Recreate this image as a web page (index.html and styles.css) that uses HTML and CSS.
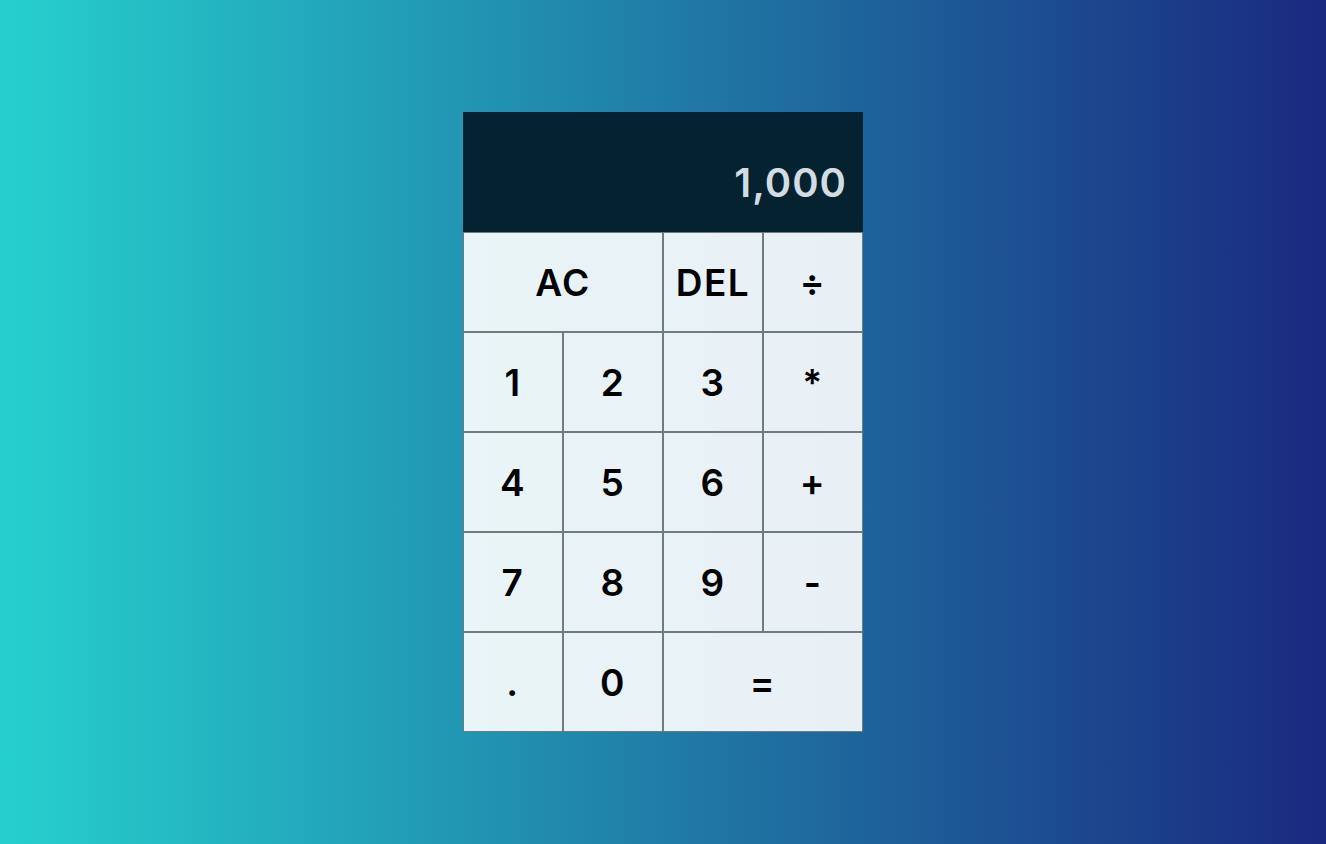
FILE: index.html
```html
<!DOCTYPE html>
<html lang="en">
<head>
<meta charset="utf-8">
<title>Calculator</title>
<link rel="stylesheet" href="styles.css">
</head>
<body>
<div class="calculator">
  <div class="output"><div class="current">1,000</div></div>
  <button class="btn span-two">AC</button>
  <button class="btn">DEL</button>
  <button class="btn">÷</button>
  <button class="btn">1</button>
  <button class="btn">2</button>
  <button class="btn">3</button>
  <button class="btn">*</button>
  <button class="btn">4</button>
  <button class="btn">5</button>
  <button class="btn">6</button>
  <button class="btn">+</button>
  <button class="btn">7</button>
  <button class="btn">8</button>
  <button class="btn">9</button>
  <button class="btn">-</button>
  <button class="btn">.</button>
  <button class="btn">0</button>
  <button class="btn span-two">=</button>
</div>
</body>
</html>
```
FILE: styles.css
```css
*, *::before, *::after { box-sizing: border-box; }
html, body { margin: 0; padding: 0; }
body {
  min-height: 100vh;
  background: linear-gradient(to right, #26d0ce, #1a2980);
  font-family: Inter, "Noto Sans", sans-serif;
  display: grid;
  place-items: center;
}
.calculator {
  display: grid;
  grid-template-columns: repeat(4, 100px);
  grid-template-rows: 120px repeat(5, 100px);
}
.output {
  grid-column: 1 / -1;
  background: #04222f;
  display: flex;
  align-items: flex-end;
  justify-content: flex-end;
  padding: 0 16px 29px;
}
.current {
  color: #d3dce3;
  font-size: 40px;
  font-weight: 600;
  line-height: 1;
  letter-spacing: 1px;
}
.btn {
  font-family: Inter, "Noto Sans", sans-serif;
  font-size: 37px;
  font-weight: 600;
  letter-spacing: 1.5px;
  color: #000;
  background: rgba(255, 255, 255, 0.9);
  border: 1px solid #6c7d7a;
  padding: 0;
  margin: 0;
  outline: none;
  cursor: pointer;
}
.span-two { grid-column: span 2; }
```
